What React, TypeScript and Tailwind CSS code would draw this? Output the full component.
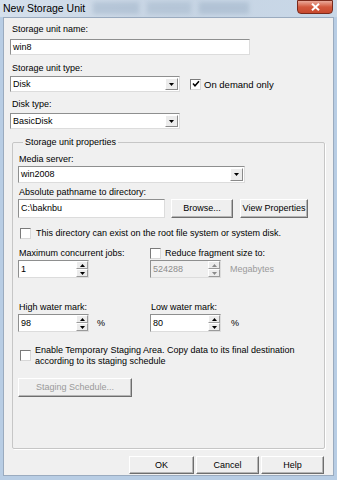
import React from 'react';

const font = "font-['Liberation_Sans',Arial,sans-serif]";

function Arrow({ up = false, grey = false }: { up?: boolean; grey?: boolean }) {
  return (
    <svg width="5" height="3" viewBox="0 0 5 3" className="block">
      <path d={up ? 'M0 3 L2.5 0 L5 3 Z' : 'M0 0 L5 0 L2.5 3 Z'} fill={grey ? '#8a8a8a' : '#000'} />
    </svg>
  );
}

function Combo({ value, width, height }: { value: string; width: string; height: string }) {
  return (
    <div className={`flex ${width} ${height} bg-white border border-t-[#8e8f8f] border-l-[#8e8f8f] border-r-[#dcdcdc] border-b-[#dcdcdc]`}>
      <div className="flex-1 flex items-center pl-[2px] text-black">{value}</div>
      <div className="my-[1px] mr-[1px] w-[13px] flex items-center justify-center bg-[#ececec] border border-t-white border-l-white border-r-[#8a8a8a] border-b-[#8a8a8a]">
        <Arrow />
      </div>
    </div>
  );
}

function TextBox({ value, width, height }: { value: string; width: string; height: string }) {
  return (
    <div className={`flex items-center ${width} ${height} bg-white border border-t-[#8e8f8f] border-l-[#8e8f8f] border-r-[#dcdcdc] border-b-[#dcdcdc] pl-[2px] text-black`}>
      {value}
    </div>
  );
}

function Spinner({ value, disabled = false }: { value: string; disabled?: boolean }) {
  return (
    <div
      className={`flex w-[71px] h-[18px] border border-t-[#8e8f8f] border-l-[#8e8f8f] border-r-[#dcdcdc] border-b-[#dcdcdc] ${
        disabled ? 'bg-[#f0f0f0]' : 'bg-white'
      }`}
    >
      <div className={`flex-1 flex items-center pl-[2px] ${disabled ? 'text-[#8d8d8d]' : 'text-black'}`}>{value}</div>
      <div className="w-[12px] flex flex-col">
        <div className="flex-1 flex items-center justify-center bg-[#ececec] border border-t-white border-l-white border-r-[#9a9a9a] border-b-[#9a9a9a]">
          <Arrow up grey={disabled} />
        </div>
        <div className="flex-1 flex items-center justify-center bg-[#ececec] border border-t-white border-l-white border-r-[#9a9a9a] border-b-[#9a9a9a]">
          <Arrow grey={disabled} />
        </div>
      </div>
    </div>
  );
}

function Check({ checked = false }: { checked?: boolean }) {
  return (
    <div className="w-[11px] h-[11px] shrink-0 bg-white border border-t-[#7a7a7a] border-l-[#7a7a7a] border-r-[#d8d8d8] border-b-[#d8d8d8] flex items-center justify-center">
      {checked && (
        <svg width="8" height="8" viewBox="0 0 8 8">
          <path d="M1 3.5 L3 5.8 L7 1.2" stroke="#000" strokeWidth="1.5" fill="none" />
        </svg>
      )}
    </div>
  );
}

function Button({ label, width, disabled = false }: { label: string; width: string; disabled?: boolean }) {
  return (
    <div
      className={`${width} h-full flex items-center justify-center bg-[#efefef] border border-t-white border-l-white border-r-[#6e6e6e] border-b-[#6e6e6e] shadow-[inset_-1px_-1px_0_#b5b5b5] ${
        disabled ? 'text-[#9a9a9a]' : 'text-black'
      }`}
    >
      {label}
    </div>
  );
}

export default function App() {
  return (
    <div className={`w-[337px] h-[480px] flex flex-col bg-[#b8cde4] ${font} text-[9px] leading-[13px] overflow-hidden`}>
      {/* Title bar */}
      <div className="h-[17px] flex items-start bg-gradient-to-r from-[#d5e0ec] via-[#c6d4e3] to-[#c9d8e8]">
        <div className="pl-[3px] pt-[2px] text-[10.5px] leading-[12px] text-black whitespace-nowrap">New Storage Unit</div>
        <div className="flex-1 flex items-start gap-[8px] pl-[8px] pt-[2px] blur-[2px] opacity-40">
          <div className="w-[46px] h-[12px] bg-[#95aac1]" />
          <div className="w-[44px] h-[12px] bg-[#9db1c6]" />
          <div className="w-[50px] h-[12px] bg-[#93a8bf]" />
        </div>
        <div className="mr-[4px] w-[36px] h-[14px] rounded-b-[4px] border border-[#7a2a1c] bg-gradient-to-b from-[#e9a99a] via-[#d2583d] to-[#c8492e] flex items-center justify-center">
          <svg width="9" height="8" viewBox="0 0 9 8">
            <path d="M1 0.8 L8 7.2 M8 0.8 L1 7.2" stroke="#fff" strokeWidth="2" />
          </svg>
        </div>
      </div>

      {/* Client area */}
      <div className="flex-1 mx-[3px] mb-[4px] bg-[#f0f0f0] border border-[#9aabbf] flex flex-col pl-[6px] pr-[8px] text-black">
        <div className="mt-[5px] pl-[2px]">Storage unit name:</div>
        <div className="mt-[3px]">
          <TextBox value="win8" width="w-[240px]" height="h-[16px]" />
        </div>

        <div className="mt-[7px] pl-[2px]">Storage unit type:</div>
        <div className="mt-[1px] flex items-center">
          <Combo value="Disk" width="w-[170px]" height="h-[16px]" />
          <div className="ml-[10px] flex items-center gap-[3px]">
            <Check checked />
            <span className="text-[9.5px]">On demand only</span>
          </div>
        </div>

        <div className="mt-[6px] pl-[2px]">Disk type:</div>
        <div className="mt-[2px]">
          <Combo value="BasicDisk" width="w-[170px]" height="h-[16px]" />
        </div>

        {/* Group box */}
        <fieldset className="mt-[7px] ml-[2px] w-[313px] h-[313px] border border-[#c6c6c6] shadow-[1px_1px_0_#ffffff] rounded-[2px] pl-[5px]">
          <legend className="ml-[5px] px-[2px] h-[13px]">Storage unit properties</legend>
          <div className="mt-[4px] pl-[1px]">Media server:</div>
          <Combo value="win2008" width="w-[227px]" height="h-[17px]" />

          <div className="mt-[3px] pl-[1px]">Absolute pathname to directory:</div>
          <div className="flex items-center h-[19px]">
            <TextBox value="C:\baknbu" width="w-[147px]" height="h-[19px]" />
            <div className="ml-[6px] h-full">
              <Button label="Browse..." width="w-[62px]" />
            </div>
            <div className="ml-[7px] h-full">
              <Button label="View Properties" width="w-[68px]" />
            </div>
          </div>

          <div className="mt-[9px] pl-[2px] flex items-center gap-[5px]">
            <Check />
            <span>This directory can exist on the root file system or system disk.</span>
          </div>

          <div className="mt-[7px] flex">
            <div className="w-[132px]">
              <div className="pl-[1px]">Maximum concurrent jobs:</div>
              <Spinner value="1" />
            </div>
            <div>
              <div className="flex items-center gap-[4px]">
                <Check />
                <span>Reduce fragment size to:</span>
              </div>
              <div className="flex items-center">
                <Spinner value="524288" disabled />
                <span className="ml-[9px] text-[#9a9a9a]">Megabytes</span>
              </div>
            </div>
          </div>

          <div className="mt-[23px] flex">
            <div className="w-[132px]">
              <div className="pl-[1px]">High water mark:</div>
              <div className="flex items-center">
                <Spinner value="98" />
                <span className="ml-[8px]">%</span>
              </div>
            </div>
            <div>
              <div className="pl-[1px]">Low water mark:</div>
              <div className="flex items-center">
                <Spinner value="80" />
                <span className="ml-[10px]">%</span>
              </div>
            </div>
          </div>

          <div className="mt-[13px] pl-[2px] flex items-start gap-[4px]">
            <div className="mt-[5px]">
              <Check />
            </div>
            <div className="leading-[11px]">
              Enable Temporary Staging Area. Copy data to its final destination
              <br />
              according to its staging schedule
            </div>
          </div>

          <div className="mt-[11px] h-[19px]">
            <Button label="Staging Schedule..." width="w-[114px]" disabled />
          </div>
        </fieldset>

        {/* Dialog buttons */}
        <div className="mt-[7px] h-[18px] flex justify-end gap-[2px] pr-[1px]">
          <Button label="OK" width="w-[65px]" />
          <Button label="Cancel" width="w-[63px]" />
          <Button label="Help" width="w-[63px]" />
        </div>
      </div>
    </div>
  );
}
